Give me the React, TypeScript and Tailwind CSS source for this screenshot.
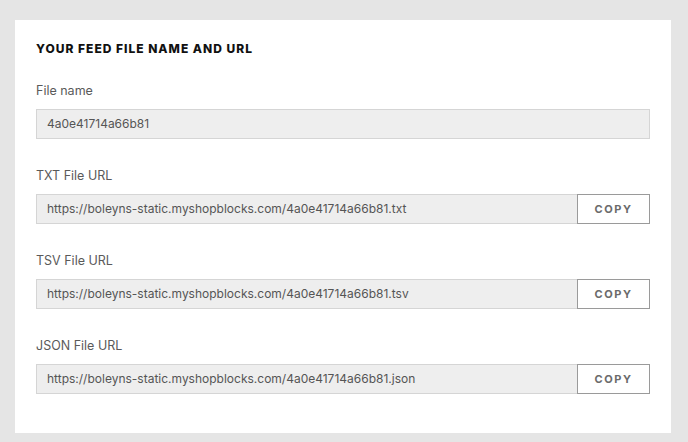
const fileName = '4a0e41714a66b81'
const base = 'https://boleyns-static.myshopblocks.com/' + fileName

const urls = [
	{label: 'TXT File URL', value: base + '.txt'},
	{label: 'TSV File URL', value: base + '.tsv'},
	{label: 'JSON File URL', value: base + '.json'}
]

export default function App() {
	return (
		<div
			className="min-h-[442px] w-full bg-[#e5e5e5] pt-[20px] pl-[15px] pr-[17px] pb-[9px]"
			style={{fontFamily: 'Inter, "Noto Sans", sans-serif'}}>
			<div className="bg-white px-[21px] pt-[20px] pb-[39px]">
				<h2 className="h-[16px] pt-[1px] text-[12px] font-extrabold leading-[16px] tracking-[1px] text-[#111]">
					YOUR FEED FILE NAME AND URL
				</h2>
				<div className="mt-[23px] flex flex-col gap-[25px]">
					<div>
						<div className="h-[20px] pt-[2px] text-[12.5px] leading-[20px] text-[#5a5a5a]">File name</div>
						<div className="mt-[10px] flex h-[30px] items-center border border-[#d5d5d5] bg-[#eeeeee] px-[10px] text-[12px] text-[#555]">
							{fileName}
						</div>
					</div>
					{urls.map((u) => (
						<div key={u.label}>
							<div className="h-[20px] pt-[2px] text-[12.5px] leading-[20px] text-[#5a5a5a]">{u.label}</div>
							<div className="mt-[10px] flex h-[30px]">
								<div className="flex flex-1 items-center border border-r-0 border-[#d5d5d5] bg-[#eeeeee] px-[10px] text-[12px] text-[#555]">
									{u.value}
								</div>
								<button className="flex w-[73px] items-center justify-center border border-[#9a9a9a] bg-white text-[11px] font-bold tracking-[1.6px] text-[#6b6b6b]">
									COPY
								</button>
							</div>
						</div>
					))}
				</div>
			</div>
		</div>
	)
}
